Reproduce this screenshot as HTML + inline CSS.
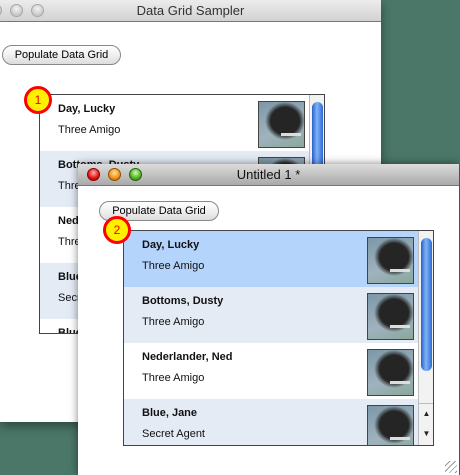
<!DOCTYPE html>
<html><head><style>
*{margin:0;padding:0;box-sizing:border-box}
body{width:460px;height:475px;overflow:hidden;background:#4a7767;position:relative;font-family:"Liberation Sans","DejaVu Sans",sans-serif;font-size:11px;color:#111}
.abs{position:absolute}
.win{position:absolute;background:#fff;overflow:hidden}
.tb{position:absolute;left:0;right:0;top:0;background:linear-gradient(#ececec,#d2d2d2);border-bottom:1px solid #777;text-align:center;font-size:13px;color:#333}
.light{position:absolute;width:13px;height:13px;border-radius:50%}
.grey{background:radial-gradient(circle at 50% 35%,#f4f4f4,#c8c8c8 70%);border:1px solid #a8a8a8}
.btn{position:absolute;height:20px;border:1px solid #888;border-radius:10px;background:linear-gradient(#fff,#f0f0f0 50%,#ddd);font-size:11px;line-height:18px;text-align:center;color:#000}
.grid{position:absolute;border:1px solid #444;background:#fff;overflow:hidden}
.row{position:absolute;left:0;height:56px}
.row b{position:absolute;left:18px;top:8px;font-size:11px}
.row span{position:absolute;left:18px;top:29px;font-size:11px}
.img{position:absolute;width:47px;height:47px;border:1px solid #444;background:radial-gradient(ellipse 20px 19px at 58% 42%,#252525 72%,transparent 100%),linear-gradient(160deg,#7d97a8,#9fb3be 60%,#8aa79a)}
.img:after{content:"";position:absolute;left:22px;top:31px;width:20px;height:3px;background:#ddd}
.sb{position:absolute;width:15px;background:#f2f2f2;border-left:1px solid #bbb}
.thumb{position:absolute;left:2px;width:11px;border-radius:6px;background:linear-gradient(90deg,#2a5fd0,#7fb4f5 45%,#2f6ad8)}
.badge{position:absolute;width:28px;height:28px;border-radius:50%;background:#ffef00;border:3px solid #f00;color:#e00;font-size:12px;text-align:center;line-height:22px}
</style></head><body>

<!-- window 1 -->
<div class="win" style="left:0;top:0;width:381px;height:422px;box-shadow:0 4px 10px rgba(0,0,0,.4)">
 <div class="tb" style="height:22px;line-height:21px">Data Grid Sampler</div>
 <div class="light grey" style="left:-11px;top:4px"></div>
 <div class="light grey" style="left:10px;top:4px"></div>
 <div class="light grey" style="left:31px;top:4px"></div>
 <div class="btn" style="left:2px;top:45px;width:119px">Populate Data Grid</div>
 <div class="grid" style="left:39px;top:94px;width:286px;height:240px">
  <div class="row" style="top:0;width:270px;background:#fff"><b>Day, Lucky</b><span>Three Amigo</span><div class="img" style="left:218px;top:6px"></div></div>
  <div class="row" style="top:56px;width:270px;background:#e4ebf5"><b>Bottoms, Dusty</b><span>Three Amigo</span><div class="img" style="left:218px;top:6px"></div></div>
  <div class="row" style="top:112px;width:270px;background:#fff"><b>Nederlander, Ned</b><span>Three Amigo</span></div>
  <div class="row" style="top:168px;width:270px;background:#e4ebf5"><b>Blue, Jane</b><span>Secret Agent</span></div>
  <div class="row" style="top:224px;width:270px;background:#fff"><b>Blue, Jane</b></div>
  <div class="sb" style="left:269px;top:0;height:240px"><div class="thumb" style="top:7px;height:240px"></div></div>
 </div>
 <div class="badge" style="left:24px;top:86px">1</div>
</div>

<!-- window 2 -->
<div class="win" style="left:78px;top:164px;width:381px;height:311px;box-shadow:0 0 8px rgba(0,0,0,.5)">
 <div class="tb" style="height:22px;line-height:21px;background:linear-gradient(#dcdcdc,#a9a9a9);color:#111">Untitled 1 *</div>
 <div class="light" style="left:9px;top:4px;background:radial-gradient(circle at 50% 35%,#ffb0b0,#e01010 60%,#900);border:1px solid #800"></div>
 <div class="light" style="left:30px;top:4px;background:radial-gradient(circle at 50% 35%,#ffe0a0,#f09010 60%,#a05000);border:1px solid #8a5000"></div>
 <div class="light" style="left:51px;top:4px;background:radial-gradient(circle at 50% 35%,#d0ffb0,#50b020 60%,#2a7010);border:1px solid #2a6010"></div>
 <div class="btn" style="left:21px;top:37px;width:120px">Populate Data Grid</div>
 <div class="grid" style="left:45px;top:66px;width:311px;height:216px">
  <div class="row" style="top:0;width:295px;background:#b5d4fb"><b>Day, Lucky</b><span>Three Amigo</span><div class="img" style="left:243px;top:6px"></div></div>
  <div class="row" style="top:56px;width:295px;background:#e4ebf5"><b>Bottoms, Dusty</b><span>Three Amigo</span><div class="img" style="left:243px;top:6px"></div></div>
  <div class="row" style="top:112px;width:295px;background:#fff"><b>Nederlander, Ned</b><span>Three Amigo</span><div class="img" style="left:243px;top:6px"></div></div>
  <div class="row" style="top:168px;width:295px;background:#e4ebf5"><b>Blue, Jane</b><span>Secret Agent</span><div class="img" style="left:243px;top:6px"></div></div>
  <div class="sb" style="left:294px;top:0;height:216px">
   <div class="thumb" style="top:7px;height:133px"></div>
   <div class="abs" style="left:0;top:172px;width:15px;height:44px;border-top:1px solid #bbb;font-size:8px;text-align:center;line-height:20px;color:#222">▲<br>▼</div>
  </div>
 </div>
 <div class="badge" style="left:25px;top:52px">2</div>
 <div class="abs" style="right:2px;bottom:2px;width:12px;height:12px;background:repeating-linear-gradient(135deg,transparent 0 3px,#999 3px 4px)"></div>
</div>
</body></html>
